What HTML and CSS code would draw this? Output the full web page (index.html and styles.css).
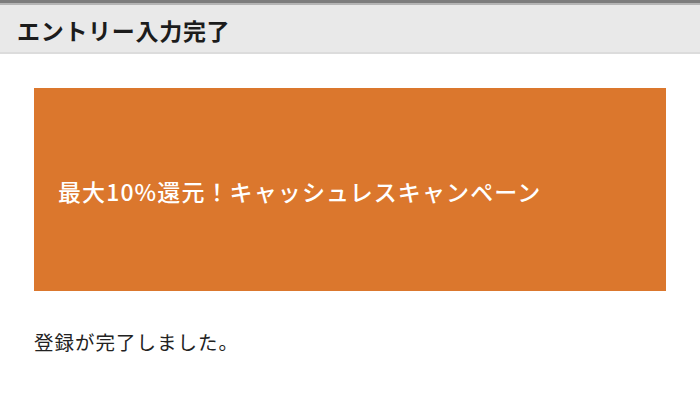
FILE: index.html
```html
<!DOCTYPE html>
<html lang="ja">

<head>
    <meta charset="UTF-8">
    <title>エントリー入力完了</title>
    <link rel="stylesheet" href="styles.css">
</head>

<body>
    <div class="header">
        <h1>エントリー入力完了</h1>
    </div>
    <div class="content">
        <div class="banner">
            <p>最大10%還元！キャッシュレスキャンペーン</p>
        </div>
        <p class="message">登録が完了しました。</p>
    </div>
</body>

</html>
```

FILE: styles.css
```css
body {
    font-family: "Noto Sans CJK JP", "Noto Sans", sans-serif;
    margin: 0;
    padding: 0;
    background-color: #fff;
    color: #222;
}

.header {
    height: 47px;
    margin-top: 5px;
    background-color: #e9e9e9;
    border-bottom: 2px solid #dcdcdc;
    box-shadow: 0 -2px 0 0 #b5b5b5, 0 -5px 0 0 #7d7d7d;
    display: flex;
    align-items: center;
    padding-left: 17px;
}

.header h1 {
    margin: 0;
    font-size: 23px;
    font-weight: bold;
    color: #1c1c1c;
    letter-spacing: 0.7px;
    padding-top: 2px;
}

.content {
    padding: 34px 34px 0 34px;
}

.banner {
    height: 203px;
    background-color: #db772d;
    display: flex;
    align-items: center;
    padding-left: 24px;
}

.banner p {
    margin: 0;
    color: #fff;
    font-size: 23px;
    font-weight: 500;
    letter-spacing: 1.1px;
    padding-top: 2px;
}

.message {
    margin: 36px 0 0 0;
    font-size: 19.5px;
    letter-spacing: 1px;
    color: #222;
}
```
